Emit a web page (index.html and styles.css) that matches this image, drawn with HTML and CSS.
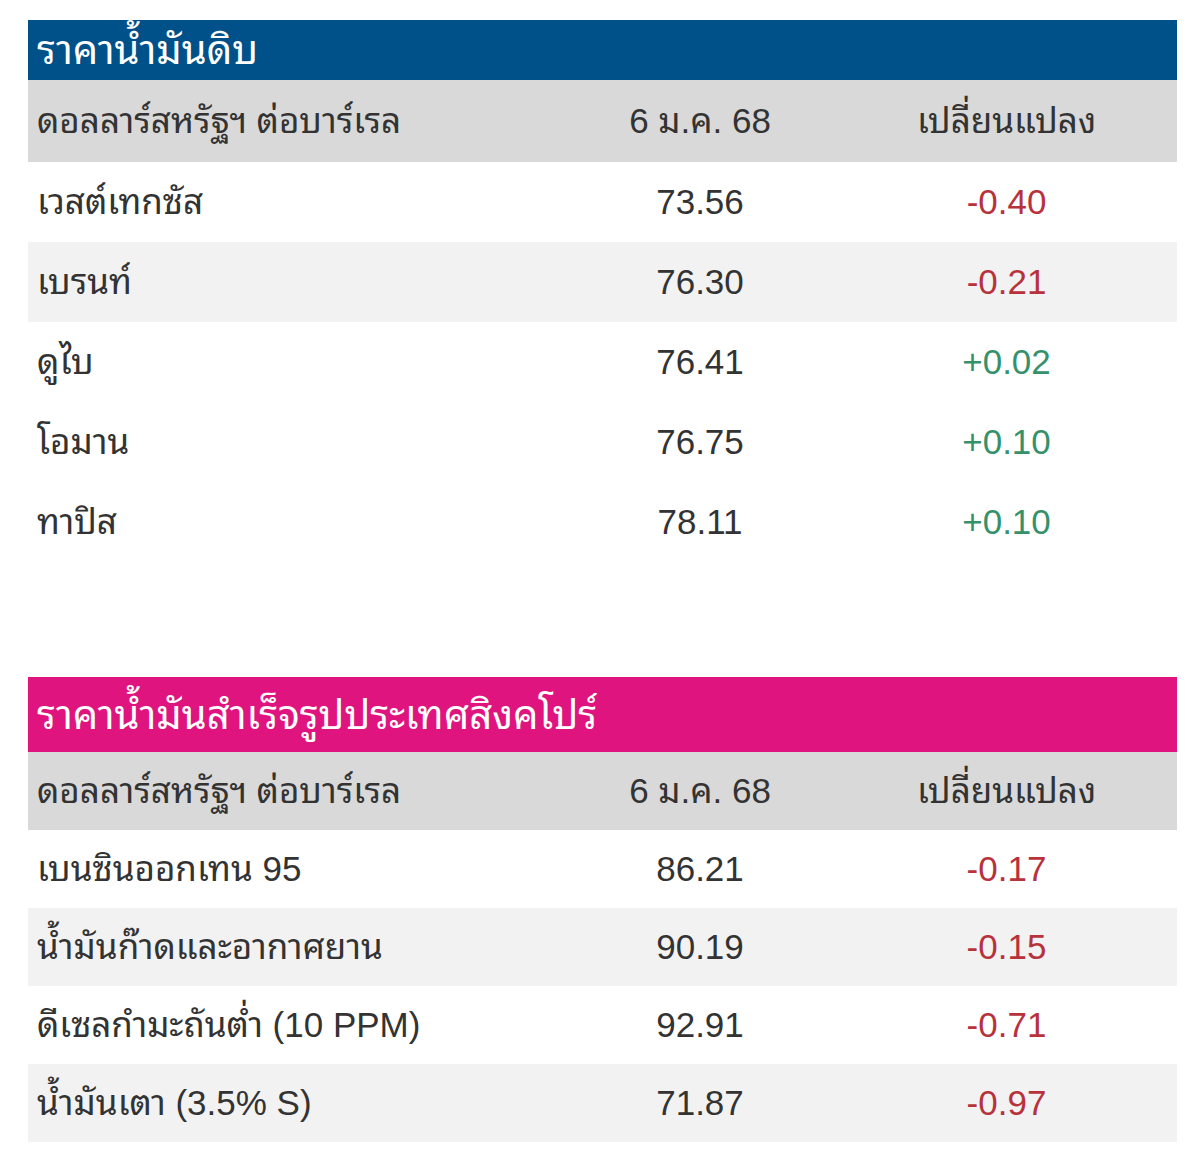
FILE: index.html
```html
<!DOCTYPE html>
<html lang="th">
<head>
<meta charset="utf-8">
<title>ราคาน้ำมัน</title>
<link rel="stylesheet" href="styles.css">
</head>
<body>
<div class="page">
  <table class="price crude">
    <colgroup><col class="c1"><col class="c2"><col class="c3"></colgroup>
    <thead>
      <tr class="title"><th colspan="3">ราคาน้ำมันดิบ</th></tr>
      <tr class="head"><th class="name">ดอลลาร์สหรัฐฯ ต่อบาร์เรล</th><th>6 ม.ค. 68</th><th>เปลี่ยนแปลง</th></tr>
    </thead>
    <tbody>
      <tr><td class="name">เวสต์เทกซัส</td><td>73.56</td><td class="down">-0.40</td></tr>
      <tr class="alt"><td class="name">เบรนท์</td><td>76.30</td><td class="down">-0.21</td></tr>
      <tr><td class="name">ดูไบ</td><td>76.41</td><td class="up">+0.02</td></tr>
      <tr><td class="name">โอมาน</td><td>76.75</td><td class="up">+0.10</td></tr>
      <tr><td class="name">ทาปิส</td><td>78.11</td><td class="up">+0.10</td></tr>
    </tbody>
  </table>

  <table class="price refined">
    <colgroup><col class="c1"><col class="c2"><col class="c3"></colgroup>
    <thead>
      <tr class="title"><th colspan="3">ราคาน้ำมันสำเร็จรูปประเทศสิงคโปร์</th></tr>
      <tr class="head"><th class="name">ดอลลาร์สหรัฐฯ ต่อบาร์เรล</th><th>6 ม.ค. 68</th><th>เปลี่ยนแปลง</th></tr>
    </thead>
    <tbody>
      <tr><td class="name">เบนซินออกเทน 95</td><td>86.21</td><td class="down">-0.17</td></tr>
      <tr class="alt"><td class="name">น้ำมันก๊าดและอากาศยาน</td><td>90.19</td><td class="down">-0.15</td></tr>
      <tr><td class="name">ดีเซลกำมะถันต่ำ (10 PPM)</td><td>92.91</td><td class="down">-0.71</td></tr>
      <tr class="alt"><td class="name">น้ำมันเตา (3.5% S)</td><td>71.87</td><td class="down">-0.97</td></tr>
    </tbody>
  </table>
</div>
</body>
</html>
```

FILE: styles.css
```css
html, body {
  margin: 0;
  padding: 0;
  background: #ffffff;
}

.page {
  padding: 20px 0 0 28px;
  font-family: "Liberation Sans", "Noto Sans Thai Looped", "Noto Sans Thai", "Noto Sans", sans-serif;
  color: #333333;
}

.price {
  width: 1149px;
  border-collapse: collapse;
  table-layout: fixed;
  font-size: 35px;
  line-height: 40px;
}

.price .c1 { width: 536px; }
.price .c2 { width: 272px; }
.price .c3 { width: 341px; }

.price th,
.price td {
  padding: 0;
  text-align: center;
  font-weight: normal;
  vertical-align: middle;
}

.price .name {
  text-align: left;
  padding-left: 9px;
}

.title th {
  text-align: left;
  padding-left: 9px;
  color: #ffffff;
  height: 60px;
  font-size: 40px;
  line-height: 44px;
}

.crude .title th { background: #00518a; }
.refined .title th { background: #e0147e; height: 75px; }

.head th {
  background: #d9d9d9;
  height: 82px;
}

.refined .head th { height: 78px; }

.price tbody td { height: 80px; }
.refined tbody td { height: 78px; }

.price tr.alt td { background: #f2f2f2; }

.down { color: #b8323c; }
.up { color: #35916a; }

.refined {
  margin-top: 115px;
}
```
